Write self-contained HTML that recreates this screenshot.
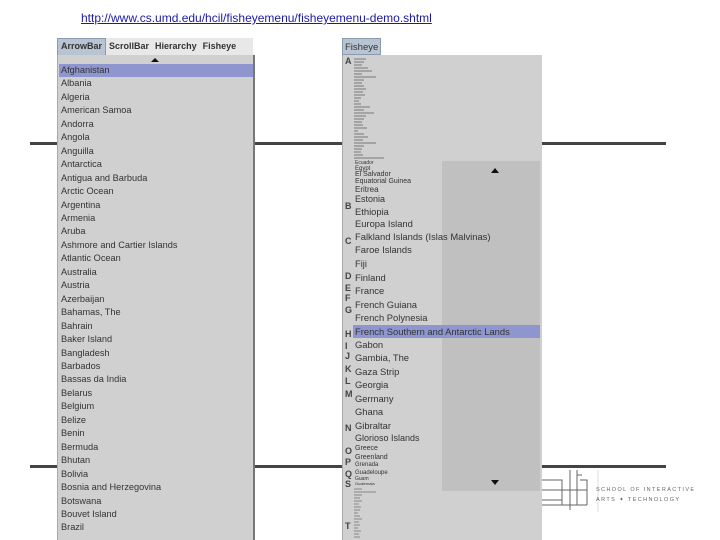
<!DOCTYPE html>
<html><head><meta charset="utf-8"><style>
body{margin:0;width:720px;height:540px;overflow:hidden;background:#fff;position:relative;font-family:"Liberation Sans",sans-serif}
.a{position:absolute}
.hl{position:absolute;height:3px;background:#444}
#url{left:81px;top:11px;font-size:12px;color:#1a1aaa;text-decoration:underline}
#lp{left:57px;top:55px;width:195px;height:485px;background:#d0d0d0;border-left:1px solid #aaa;border-right:2px solid #777}
#tabs{left:57px;top:38px;width:196px;height:17px;background:#e8e8e8;font-size:9px;font-weight:bold;color:#333;white-space:nowrap}
#tabs span{display:inline-block;padding:3px 3px 0 3px;height:14px}
.list{position:absolute;left:3px;top:9px;font-size:9.2px;line-height:13.45px;color:#333}
#rp{left:342px;top:55px;width:199px;height:485px;background:#d0d0d0;border-left:1px solid #aaa}
#rtab{left:342px;top:38px;width:39px;height:17px;background:#b8c4d2;border:1px solid #8a9ab0;font-size:9.5px;color:#333;padding:3px 0 0 2px;box-sizing:border-box}
#sb{left:442px;top:161px;width:98px;height:330px;background:#c0c0c0}
.it{position:absolute;left:355px;color:#333;white-space:nowrap;line-height:1}
.lt{position:absolute;left:345px;font-size:9px;font-weight:bold;color:#444;line-height:1}
</style></head><body>
<div class="a" id="url">http://www.cs.umd.edu/hcil/fisheyemenu/fisheyemenu-demo.shtml</div>
<div class="hl" style="left:30px;top:142px;width:636px"></div>
<div class="hl" style="left:30px;top:465px;width:636px"></div>

<div class="a" id="tabs"><span style="background:#b8c4d2;border:1px solid #8a9ab0;height:14px;padding-top:2px">ArrowBar</span><span>ScrollBar</span><span>Hierarchy</span><span>Fisheye</span></div>
<div class="a" id="lp">
<div class="a" style="left:93px;top:3px;width:0;height:0;border-left:4px solid transparent;border-right:4px solid transparent;border-bottom:4px solid #111"></div>
<div class="a" style="left:1px;top:9px;width:194px;height:13px;background:#8f96cf"></div>
<div class="list">Afghanistan<br>Albania<br>Algeria<br>American Samoa<br>Andorra<br>Angola<br>Anguilla<br>Antarctica<br>Antigua and Barbuda<br>Arctic Ocean<br>Argentina<br>Armenia<br>Aruba<br>Ashmore and Cartier Islands<br>Atlantic Ocean<br>Australia<br>Austria<br>Azerbaijan<br>Bahamas, The<br>Bahrain<br>Baker Island<br>Bangladesh<br>Barbados<br>Bassas da India<br>Belarus<br>Belgium<br>Belize<br>Benin<br>Bermuda<br>Bhutan<br>Bolivia<br>Bosnia and Herzegovina<br>Botswana<br>Bouvet Island<br>Brazil</div>
</div>

<div class="a" id="rtab">Fisheye</div>
<div class="a" id="rp"></div>
<div class="a" id="sb"></div>
<div class="a" style="left:491px;top:168px;border-left:4px solid transparent;border-right:4px solid transparent;border-bottom:5px solid #111"></div>
<div class="a" style="left:491px;top:480px;border-left:4px solid transparent;border-right:4px solid transparent;border-top:5px solid #111"></div>
<div class="a" style="left:353px;top:325px;width:187px;height:13px;background:#8f96cf"></div>
<svg class="a" style="left:354px;top:57px" width="40" height="104"><g stroke="#777" stroke-width="1">
<line x1="0" y1="2" x2="12" y2="2"/><line x1="0" y1="5" x2="10" y2="5"/><line x1="0" y1="8" x2="8" y2="8"/><line x1="0" y1="11" x2="14" y2="11"/><line x1="0" y1="14" x2="18" y2="14"/><line x1="0" y1="17" x2="8" y2="17"/><line x1="0" y1="20" x2="22" y2="20"/><line x1="0" y1="23" x2="10" y2="23"/><line x1="0" y1="26" x2="8" y2="26"/><line x1="0" y1="29" x2="10" y2="29"/><line x1="0" y1="32" x2="12" y2="32"/><line x1="0" y1="35" x2="9" y2="35"/><line x1="0" y1="38" x2="11" y2="38"/><line x1="0" y1="41" x2="7" y2="41"/><line x1="0" y1="44" x2="5" y2="44"/><line x1="0" y1="47" x2="7" y2="47"/><line x1="0" y1="50" x2="16" y2="50"/><line x1="0" y1="53" x2="10" y2="53"/><line x1="0" y1="56" x2="20" y2="56"/><line x1="0" y1="59" x2="12" y2="59"/><line x1="0" y1="62" x2="10" y2="62"/><line x1="0" y1="65" x2="8" y2="65"/><line x1="0" y1="68" x2="9" y2="68"/><line x1="0" y1="71" x2="13" y2="71"/><line x1="0" y1="74" x2="4" y2="74"/><line x1="0" y1="77" x2="10" y2="77"/><line x1="0" y1="80" x2="14" y2="80"/><line x1="0" y1="83" x2="9" y2="83"/><line x1="0" y1="86" x2="22" y2="86"/><line x1="0" y1="89" x2="10" y2="89"/><line x1="0" y1="92" x2="8" y2="92"/><line x1="0" y1="95" x2="7" y2="95"/><line x1="0" y1="98" x2="9" y2="98"/><line x1="0" y1="101" x2="30" y2="101"/></g></svg>
<div class="it" style="top:161px;font-size:5px">Ecuador</div>
<div class="it" style="top:166px;font-size:6px">Egypt</div>
<div class="it" style="top:171px;font-size:7px">El Salvador</div>
<div class="it" style="top:178px;font-size:7px">Equatorial Guinea</div>
<div class="it" style="top:186px;font-size:8px">Eritrea</div>
<div class="it" style="top:195px;font-size:9px">Estonia</div>
<div class="it" style="top:207px;font-size:9.4px">Ethiopia</div>
<div class="it" style="top:219px;font-size:9.4px">Europa Island</div>
<div class="it" style="top:232px;font-size:9.4px">Falkland Islands (Islas Malvinas)</div>
<div class="it" style="top:245px;font-size:9.4px">Faroe Islands</div>
<div class="it" style="top:259px;font-size:9.4px">Fiji</div>
<div class="it" style="top:273px;font-size:9.4px">Finland</div>
<div class="it" style="top:286px;font-size:9.4px">France</div>
<div class="it" style="top:300px;font-size:9.4px">French Guiana</div>
<div class="it" style="top:313px;font-size:9.4px">French Polynesia</div>
<div class="it" style="top:327px;font-size:9.4px">French Southern and Antarctic Lands</div>
<div class="it" style="top:340px;font-size:9.4px">Gabon</div>
<div class="it" style="top:353px;font-size:9.4px">Gambia, The</div>
<div class="it" style="top:367px;font-size:9.4px">Gaza Strip</div>
<div class="it" style="top:380px;font-size:9.4px">Georgia</div>
<div class="it" style="top:394px;font-size:9.4px">Germany</div>
<div class="it" style="top:407px;font-size:9.4px">Ghana</div>
<div class="it" style="top:421px;font-size:9.4px">Gibraltar</div>
<div class="it" style="top:434px;font-size:9px">Glorioso Islands</div>
<div class="it" style="top:445px;font-size:7px">Greece</div>
<div class="it" style="top:454px;font-size:7px">Greenland</div>
<div class="it" style="top:462px;font-size:6px">Grenada</div>
<div class="it" style="top:470px;font-size:6px">Guadeloupe</div>
<div class="it" style="top:477px;font-size:5px">Guam</div>
<div class="it" style="top:482px;font-size:4px">Guatemala</div>
<svg class="a" style="left:354px;top:488px" width="40" height="52"><g stroke="#888" stroke-width="1">
<line x1="0" y1="1" x2="8" y2="1"/><line x1="0" y1="4" x2="22" y2="4"/><line x1="0" y1="7" x2="8" y2="7"/><line x1="0" y1="10" x2="6" y2="10"/><line x1="0" y1="13" x2="8" y2="13"/><line x1="0" y1="16" x2="5" y2="16"/><line x1="0" y1="19" x2="7" y2="19"/><line x1="0" y1="22" x2="6" y2="22"/><line x1="0" y1="25" x2="4" y2="25"/><line x1="0" y1="28" x2="6" y2="28"/><line x1="0" y1="31" x2="8" y2="31"/><line x1="0" y1="34" x2="5" y2="34"/><line x1="0" y1="37" x2="6" y2="37"/><line x1="0" y1="40" x2="4" y2="40"/><line x1="0" y1="43" x2="7" y2="43"/><line x1="0" y1="46" x2="5" y2="46"/><line x1="0" y1="49" x2="6" y2="49"/></g></svg>
<div class="lt" style="top:57px">A</div><div class="lt" style="top:202px">B</div><div class="lt" style="top:237px">C</div>
<div class="lt" style="top:272px">D</div><div class="lt" style="top:284px">E</div><div class="lt" style="top:294px">F</div>
<div class="lt" style="top:306px">G</div><div class="lt" style="top:330px">H</div><div class="lt" style="top:342px">I</div>
<div class="lt" style="top:352px">J</div><div class="lt" style="top:365px">K</div><div class="lt" style="top:377px">L</div>
<div class="lt" style="top:390px">M</div><div class="lt" style="top:424px">N</div><div class="lt" style="top:447px">O</div>
<div class="lt" style="top:458px">P</div><div class="lt" style="top:470px">Q</div><div class="lt" style="top:480px">S</div>
<div class="lt" style="top:522px">T</div>

<svg class="a" style="left:542px;top:470px" width="60" height="45"><g stroke="#666" stroke-width="1" fill="none">
<path d="M0 10H20V30H0"/><path d="M0 20H45"/><path d="M20 10V35"/><path d="M28 0V40"/><path d="M35 0V35"/><path d="M35 5H40"/><path d="M38 10H45V35"/><path d="M0 35H45"/></g>
<line x1="56" y1="0" x2="56" y2="42" stroke="#ddd"/></svg>
<div class="a" style="left:596px;top:487px;font-size:5.5px;letter-spacing:1.4px;color:#666">SCHOOL OF INTERACTIVE</div>
<div class="a" style="left:596px;top:497px;font-size:5.5px;letter-spacing:1.4px;color:#666">ARTS ✦ TECHNOLOGY</div>
</body></html>
